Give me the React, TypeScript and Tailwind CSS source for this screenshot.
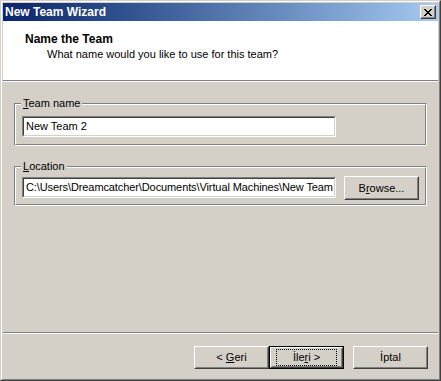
import React from "react";

const font = { fontFamily: '"Liberation Sans", Arial, sans-serif' };

function CloseGlyph() {
  const px: [number, number][] = [
    [0, 0], [1, 0], [6, 0], [7, 0],
    [1, 1], [2, 1], [5, 1], [6, 1],
    [2, 2], [3, 2], [4, 2], [5, 2],
    [3, 3], [4, 3],
    [2, 4], [3, 4], [4, 4], [5, 4],
    [1, 5], [2, 5], [5, 5], [6, 5],
    [0, 6], [1, 6], [6, 6], [7, 6],
  ];
  return (
    <svg width="8" height="7" viewBox="0 0 8 7" shapeRendering="crispEdges">
      {px.map(([x, y], i) => (
        <rect key={i} x={x} y={y} width="1" height="1" fill="#000" />
      ))}
    </svg>
  );
}

// classic raised 3D frame
function Raised({ className = "", children }: { className?: string; children?: React.ReactNode }) {
  return (
    <div className={`border border-t-white border-l-white border-r-[#404040] border-b-[#404040] ${className}`}>
      <div className="w-full h-full border border-t-[#d4d0c8] border-l-[#d4d0c8] border-r-[#808080] border-b-[#808080] bg-[#d4d0c8] flex items-center justify-center">
        {children}
      </div>
    </div>
  );
}

function TextBox({ value, className = "", inner = "" }: { value: string; className?: string; inner?: string }) {
  return (
    <div className={`border border-t-[#808080] border-l-[#808080] border-r-white border-b-white ${className}`}>
      <div className={`h-full border border-t-[#404040] border-l-[#404040] border-r-[#d4d0c8] border-b-[#d4d0c8] bg-white overflow-hidden whitespace-nowrap pl-[2px] text-[11px] leading-[17px] text-black ${inner}`}>
        {value}
      </div>
    </div>
  );
}

function GroupBox({ label, className = "", children }: { label: React.ReactNode; className?: string; children?: React.ReactNode }) {
  return (
    <div className={`relative border border-t-[#808080] border-l-[#808080] border-r-white border-b-white ${className}`}>
      <div className="h-full border border-t-white border-l-white border-r-[#808080] border-b-[#808080]">
        {children}
      </div>
      <span className="absolute left-[6px] top-[-7px] bg-[#d4d0c8] px-[2px] text-[11px] leading-[13px] text-black">
        {label}
      </span>
    </div>
  );
}

export default function App() {
  return (
    <div style={font} className="w-[441px] h-[381px] border border-t-[#d4d0c8] border-l-[#d4d0c8] border-r-[#404040] border-b-[#404040] select-none">
      <div className="w-full h-full border border-t-white border-l-white border-r-[#808080] border-b-[#808080] bg-[#d4d0c8] p-px flex flex-col">
        {/* Title bar */}
        <div className="h-[18px] shrink-0 flex items-center justify-between bg-gradient-to-r from-[#0a246a] to-[#a6caf0] pl-[2px] pr-[2px]">
          <span className="text-white font-bold text-[12px] leading-[14px]">New Team Wizard</span>
          <Raised className="w-[16px] h-[14px]">
            <CloseGlyph />
          </Raised>
        </div>

        {/* Header */}
        <div className="h-[59px] shrink-0 bg-white pl-[22px] pt-[11px] text-black">
          <div className="font-bold text-[12px] leading-[14px]">Name the Team</div>
          <div className="pl-[22px] mt-[2px] text-[11px] leading-[13px]">What name would you like to use for this team?</div>
        </div>
        <div className="h-px bg-[#808080] shrink-0" />
        <div className="h-px bg-white shrink-0" />

        {/* Body */}
        <div className="flex-1 flex flex-col px-[11px] pt-[21px] gap-[20px]">
          <GroupBox
            className="h-[43px] w-[413px]"
            label={<><span className="underline">T</span>eam name</>}
          >
            <div className="pl-[6px] pt-[11px]">
              <TextBox value="New Team 2" className="w-[314px] h-[21px]" />
            </div>
          </GroupBox>

          <GroupBox
            className="h-[40px] w-[413px]"
            label={<><span className="underline">L</span>ocation</>}
          >
            <div className="pl-[6px] pt-[8px] flex items-start gap-[8px]">
              <TextBox
                value="C:\Users\Dreamcatcher\Documents\Virtual Machines\New Team"
                className="w-[314px] h-[21px] mt-px"
                inner="tracking-[-0.1px]"
              />
              <Raised className="w-[75px] h-[24px]">
                <span className="text-[11px] leading-[13px] text-black">
                  B<span className="underline">r</span>owse...
                </span>
              </Raised>
            </div>
          </GroupBox>
        </div>

        <div className="h-px bg-[#808080] shrink-0" />
        <div className="h-px bg-white shrink-0" />

        {/* Buttons */}
        <div className="h-[44px] shrink-0 flex justify-end items-start pt-[12px] pr-[10px]">
          <Raised className="w-[75px] h-[23px]">
            <span className="text-[11px] leading-[13px] text-black">
              &lt; <span className="underline">G</span>eri
            </span>
          </Raised>
          <div className="w-[75px] h-[23px] border border-black">
            <Raised className="w-full h-full">
              <span className="text-[11px] leading-[13px] text-black border border-dotted border-black px-[10px] py-[1px] w-[61px] text-center">
                İle<span className="underline">r</span>i &gt;
              </span>
            </Raised>
          </div>
          <Raised className="w-[75px] h-[23px] ml-[9px]">
            <span className="text-[11px] leading-[13px] text-black">İptal</span>
          </Raised>
        </div>
      </div>
    </div>
  );
}
